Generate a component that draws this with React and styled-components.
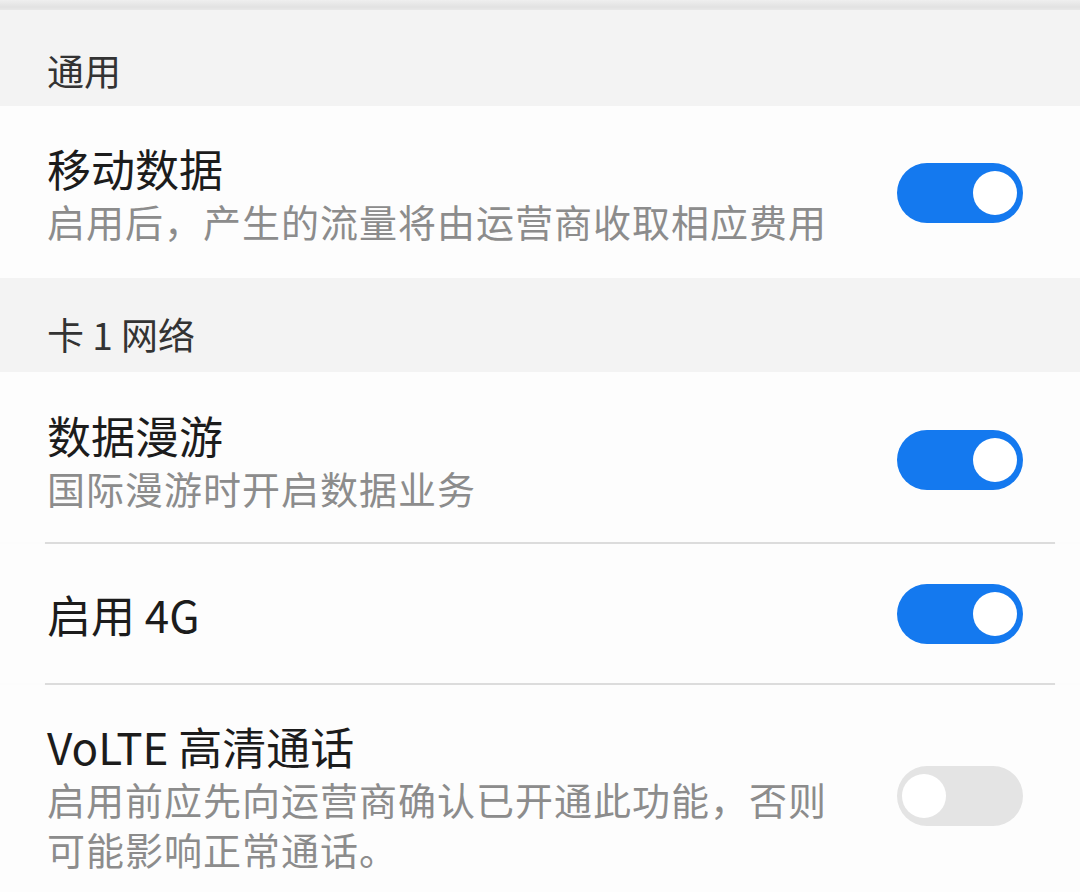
import React, { useState } from 'react';
import styled, { createGlobalStyle } from 'styled-components';

const GlobalStyle = createGlobalStyle`
  html, body {
    margin: 0;
    padding: 0;
    background: #fcfcfc;
  }
  body {
    font-family: "Noto Sans CJK SC", "Noto Sans", sans-serif;
    -webkit-font-smoothing: antialiased;
  }
`;

const Page = styled.div`
  width: 1080px;
  height: 892px;
  overflow: hidden;
  background: #fcfcfc;
`;

const TopEdge = styled.div`
  height: 10px;
  background: linear-gradient(#efefef, #e2e2e2 70%, #e8e8e8);
`;

const SectionHeader = styled.div`
  height: ${props => props.height || 96}px;
  display: flex;
  align-items: center;
  padding-left: 47px;
  padding-top: ${props => props.offset || 0}px;
  box-sizing: border-box;
  background: #f3f3f3;
  color: #333333;
  font-size: 37px;
`;

const Row = styled.div`
  display: flex;
  align-items: center;
  justify-content: space-between;
  padding: ${props => props.pad || '34px 57px 30px 47px'};
  min-height: ${props => props.minHeight || 0}px;
  box-sizing: border-box;
  background: #fdfdfd;
`;

const Texts = styled.div`
  display: flex;
  flex-direction: column;
  max-width: 800px;
`;

const Title = styled.div`
  font-size: 44px;
  line-height: 56px;
  color: #1c1c1c;
`;

const Subtitle = styled.div`
  font-size: 38px;
  line-height: 50px;
  color: #8c8c8c;
  letter-spacing: 1px;
`;

const Divider = styled.div`
  height: 2px;
  margin: 0 25px 0 45px;
  background: #dcdcdc;
  box-shadow: 0 1px 2px rgba(0, 0, 0, 0.06);
`;

const Track = styled.button`
  position: relative;
  flex: 0 0 auto;
  width: 126px;
  height: 60px;
  border: none;
  padding: 0;
  border-radius: 30px;
  background: ${props => (props.on ? '#1479ef' : '#e4e4e4')};
  cursor: pointer;
`;

const Knob = styled.span`
  position: absolute;
  top: 8px;
  left: ${props => (props.on ? '76px' : '5px')};
  width: 44px;
  height: 44px;
  border-radius: 50%;
  background: #ffffff;
`;

const Switch = ({ initial }) => {
  const [on, setOn] = useState(initial);
  return (
    <Track on={on ? 1 : 0} onClick={() => setOn(!on)}>
      <Knob on={on ? 1 : 0} />
    </Track>
  );
};

const App = () => {
  return (
    <Page>
      <GlobalStyle />
      <TopEdge />
      <SectionHeader height={96} offset={24}>通用</SectionHeader>
      <Row pad="34px 57px 32px 47px">
        <Texts>
          <Title>移动数据</Title>
          <Subtitle>启用后，产生的流量将由运营商收取相应费用</Subtitle>
        </Texts>
        <Switch initial />
      </Row>
      <SectionHeader height={94} offset={18}>卡 1 网络</SectionHeader>
      <Row pad="35px 57px 29px 47px">
        <Texts>
          <Title>数据漫游</Title>
          <Subtitle>国际漫游时开启数据业务</Subtitle>
        </Texts>
        <Switch initial />
      </Row>
      <Divider />
      <Row pad="0 57px 0 47px" minHeight={139}>
        <Texts>
          <Title>启用 4G</Title>
        </Texts>
        <Switch initial />
      </Row>
      <Divider />
      <Row pad="33px 57px 20px 47px">
        <Texts>
          <Title>VoLTE 高清通话</Title>
          <Subtitle>启用前应先向运营商确认已开通此功能，否则可能影响正常通话。</Subtitle>
        </Texts>
        <Switch initial={false} />
      </Row>
    </Page>
  );
};

export default App;
